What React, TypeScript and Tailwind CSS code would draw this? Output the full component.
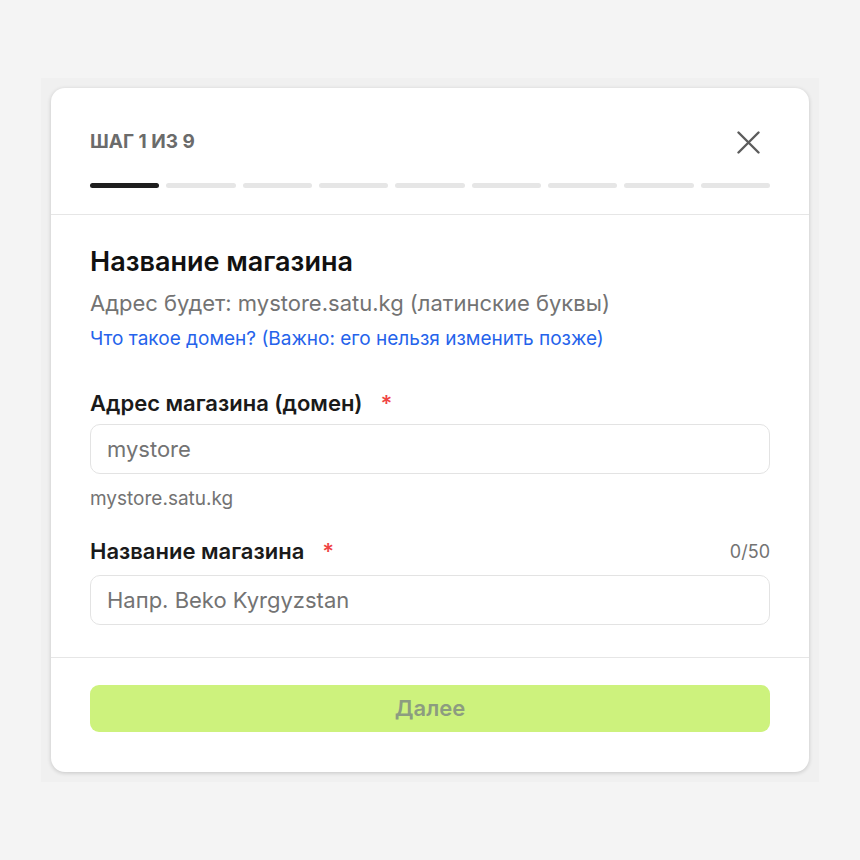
import React, { useState } from 'react';

const STEPS = 9;

const App: React.FC = () => {
  const [domain, setDomain] = useState('');
  const [name, setName] = useState('');

  return (
    <div className="min-h-screen bg-[#f4f4f4] pt-[78px] px-[41px]" style={{ fontFamily: 'Inter, "Noto Sans", sans-serif' }}>
      <div className="bg-[#f0f0f0] p-[10px] h-[704px]">
        <div className="bg-white rounded-[14px] shadow-[0_1px_4px_rgba(0,0,0,0.18)] overflow-hidden">
          {/* header */}
          <div className="px-[39px] pt-[40px] pb-[26px] border-b border-[#e6e6e6]">
            <div className="flex items-center justify-between h-[28px]">
              <span className="text-[19px] leading-[28px] font-bold text-[#6b6b6b]">ШАГ 1 ИЗ 9</span>
              <button className="text-[#5c5c5c] mr-[10px]" aria-label="Закрыть">
                <svg width="23" height="23" viewBox="0 0 23 23" fill="none" stroke="currentColor" strokeWidth="2.4" strokeLinecap="round">
                  <path d="M1.5 1.5 L21.5 21.5 M21.5 1.5 L1.5 21.5" />
                </svg>
              </button>
            </div>
            <div className="flex gap-[7px] mt-[27px]">
              {Array.from({ length: STEPS }).map((_, i) => (
                <div key={i} className={i === 0 ? 'flex-1 h-[5px] rounded-full bg-[#1e1e1e]' : 'flex-1 h-[5px] rounded-full bg-[#e6e6e6]'} />
              ))}
            </div>
          </div>

          {/* body */}
          <div className="px-[39px] pt-[30px] pb-[32px] border-b border-[#e6e6e6]">
            <h2 className="text-[27px] leading-[34px] font-semibold text-[#111111]">Название магазина</h2>
            <p className="text-[22px] leading-[30px] text-[#737373] mt-[9px]">Адрес будет: mystore.satu.kg (латинские буквы)</p>
            <a href="#" className="block text-[19px] leading-[24px] text-[#2563eb] mt-[9px]">Что такое домен? (Важно: его нельзя изменить позже)</a>

            <div className="mt-[38px]">
              <label className="flex items-center text-[22px] leading-[28px] font-semibold text-[#1a1a1a]">
                Адрес магазина (домен)
                <span className="text-[#ef4444] ml-[18px]">*</span>
              </label>
              <input
                value={domain}
                onChange={e => setDomain(e.target.value)}
                placeholder="mystore"
                className="mt-[7px] w-full h-[50px] px-[16px] rounded-[10px] border border-[#e3e3e3] text-[22px] text-[#333] placeholder:text-[#737373] outline-none"
              />
              <p className="text-[19px] leading-[24px] text-[#737373] mt-[13px]">mystore.satu.kg</p>
            </div>

            <div className="mt-[26px]">
              <div className="flex items-center justify-between">
                <label className="flex items-center text-[22px] leading-[28px] font-semibold text-[#1a1a1a]">
                  Название магазина
                  <span className="text-[#ef4444] ml-[18px]">*</span>
                </label>
                <span className="text-[18px] text-[#737373]">{name.length}/50</span>
              </div>
              <input
                value={name}
                onChange={e => setName(e.target.value)}
                maxLength={50}
                placeholder="Напр. Beko Kyrgyzstan"
                className="mt-[10px] w-full h-[50px] px-[16px] rounded-[10px] border border-[#e3e3e3] text-[22px] text-[#333] placeholder:text-[#737373] outline-none"
              />
            </div>
          </div>

          {/* footer */}
          <div className="px-[39px] pt-[27px] pb-[40px]">
            <button disabled className="w-full h-[47px] rounded-[9px] bg-[#cdf27d] text-[22px] font-semibold text-[#8c9c80]">
              Далее
            </button>
          </div>
        </div>
      </div>
    </div>
  );
};

export default App;
